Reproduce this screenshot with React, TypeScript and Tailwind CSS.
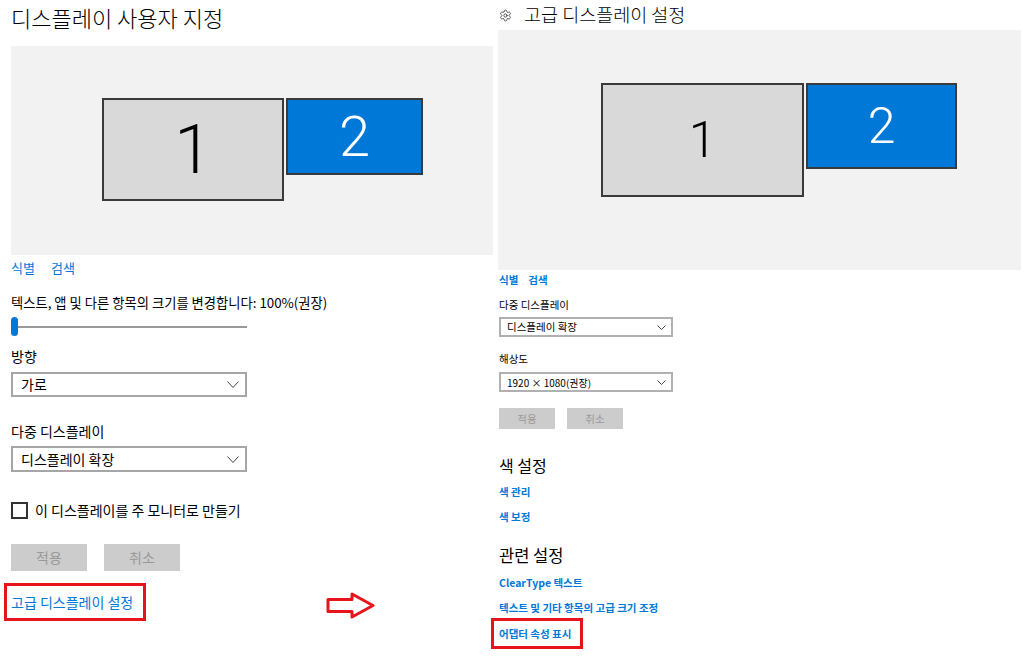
import { Settings } from "lucide-react";

const KR = "font-['Noto_Sans_CJK_KR','Noto_Sans',sans-serif]";
const NUM = "font-['Roboto','Noto_Sans',sans-serif] font-light";

function Chevron({ w, h }: { w: number; h: number }) {
  return (
    <svg width={w} height={h} viewBox={`0 0 ${w} ${h}`} fill="none" aria-hidden>
      <path
        d={`M0.5 0.5 L${w / 2} ${h - 0.5} L${w - 0.5} 0.5`}
        stroke="#444"
        strokeWidth="1"
      />
    </svg>
  );
}

function Arrow() {
  return (
    <svg width="50" height="27" viewBox="0 0 50 27" fill="none" aria-hidden>
      <path
        d="M2 7.5 H26 V2 L47 13.5 L26 25 V19.5 H2 Z"
        fill="#fff"
        stroke="#e8141c"
        strokeWidth="3"
        strokeLinejoin="round"
      />
    </svg>
  );
}

function LeftPanel() {
  return (
    <div className="flex w-[498px] shrink-0 flex-col pl-[11px]">
      <h1 className="mt-[3px] text-[22px] leading-[28px] font-light text-black">
        디스플레이 사용자 지정
      </h1>

      {/* 모니터 배치 */}
      <div className="mt-[15px] flex h-[209px] w-[482px] items-start gap-[2px] bg-[#f2f2f2] pt-[52px] pl-[91px]">
        <div className={`flex h-[103px] w-[182px] items-center justify-center border-2 border-[#3a3a3a] bg-[#d9d9d9] text-[68px] text-black ${NUM}`}>
          1
        </div>
        <div className={`flex h-[77px] w-[137px] items-center justify-center border-2 border-[#3a3a3a] bg-[#0078d7] text-[56px] text-white ${NUM}`}>
          2
        </div>
      </div>

      <div className="mt-[4px] flex gap-[16px] text-[13px] leading-[18px] text-[#0078d7]">
        <span>식별</span>
        <span>검색</span>
      </div>

      <p className="mt-[17px] text-[13.3px] leading-[18px] text-black">
        텍스트, 앱 및 다른 항목의 크기를 변경합니다: 100%(권장)
      </p>

      {/* 슬라이더 */}
      <div className="mt-[5px] flex h-[19px] w-[236px] items-center">
        <div className="h-[19px] w-[7px] rounded-full bg-[#0078d7]" />
        <div className="h-[2px] flex-1 bg-[#999]" />
      </div>

      <p className="mt-[11px] text-[14px] leading-[18px] text-black">방향</p>
      <div className="mt-[7px] flex h-[25px] w-[236px] items-center justify-between border-2 border-[#a6a6a6] pr-[6px] pl-[8px] text-[14px] text-black">
        <span>가로</span>
        <Chevron w={12} h={7} />
      </div>

      <p className="mt-[25px] text-[14px] leading-[18px] text-black">다중 디스플레이</p>
      <div className="mt-[6px] flex h-[26px] w-[236px] items-center justify-between border-2 border-[#a6a6a6] pr-[6px] pl-[8px] text-[14px] text-black">
        <span>디스플레이 확장</span>
        <Chevron w={12} h={7} />
      </div>

      <div className="mt-[29px] flex h-[18px] items-center gap-[7px]">
        <div className="h-[17px] w-[17px] border-2 border-[#333]" />
        <span className="text-[14px] text-black">이 디스플레이를 주 모니터로 만들기</span>
      </div>

      <div className="mt-[25px] flex gap-[17px]">
        <div className="flex h-[27px] w-[76px] items-center justify-center bg-[#cccccc] text-[14px] text-[#999]">
          적용
        </div>
        <div className="flex h-[27px] w-[76px] items-center justify-center bg-[#cccccc] text-[14px] text-[#999]">
          취소
        </div>
      </div>

      <div className="mt-[12px] ml-[-7px] flex items-start">
        <div className="flex h-[38px] w-[142px] items-center border-[3px] border-[#e8141c] pl-[4px] text-[14px] text-[#0078d7]">
          고급 디스플레이 설정
        </div>
        <div className="mt-[9px] ml-[180px]">
          <Arrow />
        </div>
      </div>
    </div>
  );
}

function RightPanel() {
  const link = "text-[10.5px] leading-[14px] font-semibold text-[#0078d7]";
  const label = "text-[10.5px] leading-[14px] text-black";
  return (
    <div className="flex flex-1 flex-col">
      <div className="mt-[3px] flex h-[24px] items-center pl-[1px]">
        <Settings size={13} strokeWidth={1.5} className="text-[#333]" />
        <h2 className="ml-[12px] text-[18.5px] font-light text-black">고급 디스플레이 설정</h2>
      </div>

      <div className="mt-[3px] flex h-[240px] w-[523px] items-start gap-[2px] bg-[#f2f2f2] pt-[53px] pl-[103px]">
        <div className={`flex h-[114px] w-[203px] items-center justify-center border-2 border-[#3a3a3a] bg-[#d9d9d9] text-[50px] text-black ${NUM}`}>
          1
        </div>
        <div className={`flex h-[86px] w-[151px] items-center justify-center border-2 border-[#3a3a3a] bg-[#0078d7] text-[50px] text-white ${NUM}`}>
          2
        </div>
      </div>

      <div className={`mt-[3px] ml-[1px] flex gap-[10px] ${link}`}>
        <span>식별</span>
        <span>검색</span>
      </div>

      <p className={`mt-[11px] ml-[1px] ${label}`}>다중 디스플레이</p>
      <div className="mt-[5px] ml-[1px] flex h-[20px] w-[174px] items-center justify-between border-2 border-[#b0b0b0] pr-[5px] pl-[6px] text-[10.5px] text-black">
        <span>디스플레이 확장</span>
        <Chevron w={9} h={5} />
      </div>

      <p className={`mt-[15px] ml-[1px] ${label}`}>해상도</p>
      <div className="mt-[6px] ml-[1px] flex h-[20px] w-[174px] items-center justify-between border-2 border-[#b0b0b0] pr-[5px] pl-[6px] text-[10px] text-black">
        <span>1920 × 1080(권장)</span>
        <Chevron w={9} h={5} />
      </div>

      <div className="mt-[16px] ml-[1px] flex gap-[12px]">
        <div className="flex h-[21px] w-[56px] items-center justify-center bg-[#cccccc] text-[10.5px] text-[#999]">
          적용
        </div>
        <div className="flex h-[21px] w-[56px] items-center justify-center bg-[#cccccc] text-[10.5px] text-[#999]">
          취소
        </div>
      </div>

      <h3 className="mt-[25px] ml-[1px] text-[16px] leading-[22px] text-black">색 설정</h3>
      <p className={`mt-[9px] ml-[1px] ${link}`}>색 관리</p>
      <p className={`mt-[11px] ml-[1px] ${link}`}>색 보정</p>

      <h3 className="mt-[20px] ml-[1px] text-[16.5px] leading-[22px] text-black">관련 설정</h3>
      <p className={`mt-[10px] ml-[1px] ${link}`}>ClearType 텍스트</p>
      <p className={`mt-[11px] ml-[1px] ${link}`}>텍스트 및 기타 항목의 고급 크기 조정</p>

      <div className="mt-[3px] ml-[-7px] flex h-[31px] w-[92px] items-center border-[3px] border-[#e8141c] pl-[5px]">
        <span className={link}>어댑터 속성 표시</span>
      </div>
    </div>
  );
}

export default function App() {
  return (
    <div className={`flex h-[669px] w-[1024px] overflow-hidden bg-white ${KR}`}>
      <LeftPanel />
      <RightPanel />
    </div>
  );
}
